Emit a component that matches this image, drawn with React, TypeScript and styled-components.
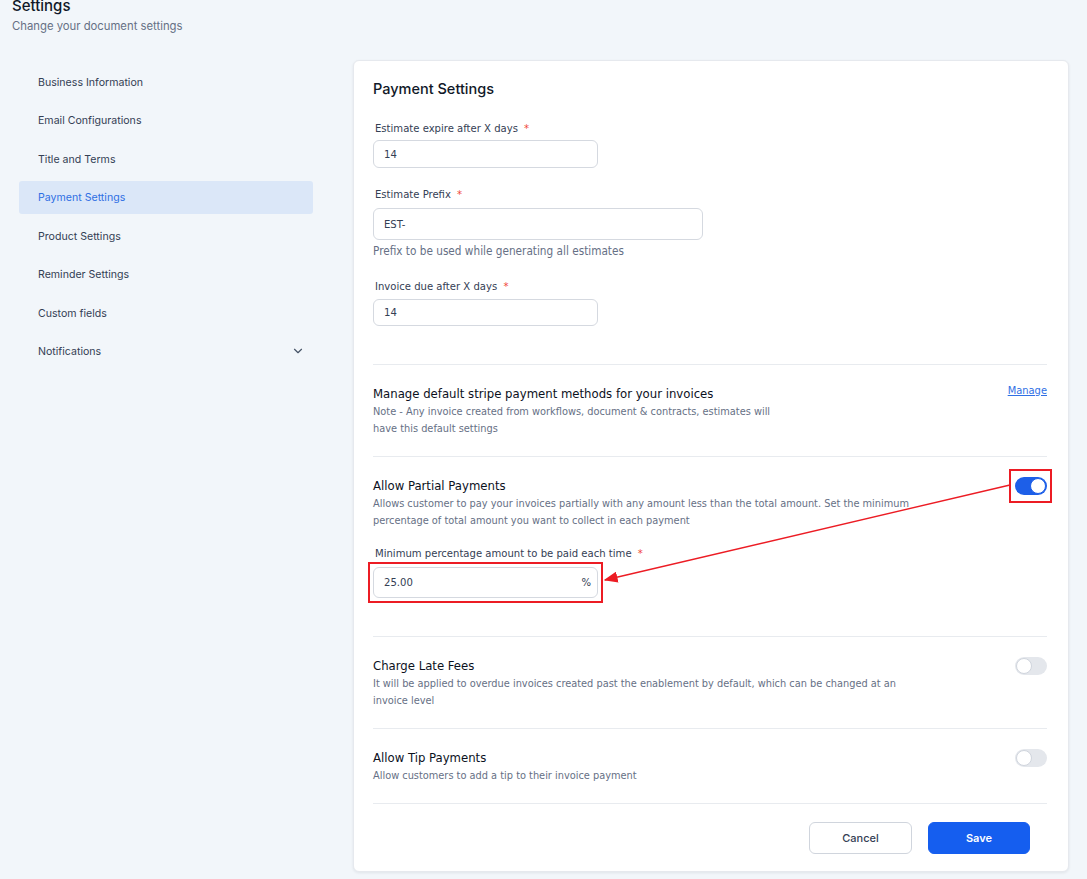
import styled, { createGlobalStyle } from "styled-components";
import { ChevronDown } from "lucide-react";

const GlobalStyle = createGlobalStyle`
  body {
    margin: 0;
    background: #f2f6fa;
    font-family: Inter, "Noto Sans", sans-serif;
    color: #101828;
  }
`;

const NAV_ITEMS = [
  "Business Information",
  "Email Configurations",
  "Title and Terms",
  "Payment Settings",
  "Product Settings",
  "Reminder Settings",
  "Custom fields",
  "Notifications",
];

export default function App() {
  return (
    <>
      <GlobalStyle />
      <Page>
        <Header>
          <h1>Settings</h1>
          <p>Change your document settings</p>
        </Header>

        <Main>
          <Sidebar>
            {NAV_ITEMS.map((item) => (
              <NavItem key={item} $active={item === "Payment Settings"}>
                {item}
                {item === "Notifications" && <ChevronDown size={14} strokeWidth={2} />}
              </NavItem>
            ))}
          </Sidebar>

          <Card>
            <CardTitle>Payment Settings</CardTitle>

            <Field $top={19}>
              <Label>
                Estimate expire after X days <Req>*</Req>
              </Label>
              <Input $width={225} $height={28} $gap={3}>
                14
              </Input>
            </Field>

            <Field $top={16}>
              <Label>
                Estimate Prefix <Req>*</Req>
              </Label>
              <Input $width={330} $height={32} $gap={5}>
                EST-
              </Input>
              <Helper>Prefix to be used while generating all estimates</Helper>
            </Field>

            <Field $top={17}>
              <Label>
                Invoice due after X days <Req>*</Req>
              </Label>
              <Input $width={225} $height={27} $gap={4}>
                14
              </Input>
            </Field>

            <Divider $top={38} />

            <Section>
              <SectionHead>
                <div>
                  <SectionTitle>Manage default stripe payment methods for your invoices</SectionTitle>
                  <Desc $max={410}>
                    Note - Any invoice created from workflows, document &amp; contracts, estimates will
                    have this default settings
                  </Desc>
                </div>
                <ManageLink href="#">Manage</ManageLink>
              </SectionHead>
            </Section>
            <Divider />

            <Section $bottom={38}>
              <SectionHead>
                <div>
                  <SectionTitle>Allow Partial Payments</SectionTitle>
                  <Desc $max={545}>
                    Allows customer to pay your invoices partially with any amount less than the total
                    amount. Set the minimum percentage of total amount you want to collect in each
                    payment
                  </Desc>
                </div>
                <Marked $pad="6px 3px 6px 4px" $margin="-6px -3px -6px -4px">
                  <Toggle $on />
                </Marked>
              </SectionHead>

              <Field $top={14}>
                <Label>
                  Minimum percentage amount to be paid each time <Req>*</Req>
                </Label>
                <Marked $pad="3px" $margin="2px -3px -3px -3px">
                  <Input $width={225} $height={31}>
                    25.00
                    <Suffix>%</Suffix>
                  </Input>
                </Marked>
              </Field>
            </Section>
            <Divider />

            <Section>
              <SectionHead>
                <div>
                  <SectionTitle>Charge Late Fees</SectionTitle>
                  <Desc $max={545}>
                    It will be applied to overdue invoices created past the enablement by default,
                    which can be changed at an invoice level
                  </Desc>
                </div>
                <Toggle />
              </SectionHead>
            </Section>
            <Divider />

            <Section>
              <SectionHead>
                <div>
                  <SectionTitle>Allow Tip Payments</SectionTitle>
                  <Desc $max={545}>Allow customers to add a tip to their invoice payment</Desc>
                </div>
                <Toggle />
              </SectionHead>
            </Section>
            <Divider />

            <Footer>
              <Button>Cancel</Button>
              <Button $primary>Save</Button>
            </Footer>

            <Arrow width="716" height="810" viewBox="0 0 716 810">
              <defs>
                <marker id="head" markerWidth="10" markerHeight="8" refX="9" refY="4" orient="auto">
                  <path d="M0 0 L10 4 L0 8 Z" fill="#ec1c24" />
                </marker>
              </defs>
              <line x1="656" y1="424" x2="251" y2="519" stroke="#ec1c24" strokeWidth="1.4" markerEnd="url(#head)" />
            </Arrow>
          </Card>
        </Main>
      </Page>
    </>
  );
}

// STYLED COMPONENTS

const NARROW = `"Liberation Sans Narrow", "DejaVu Sans Condensed", sans-serif`;

const Page = styled.div`
  display: flex;
  flex-direction: column;
  width: 1087px;
  min-height: 879px;
`;

const Header = styled.header`
  padding-left: 12px;
  margin-top: -2px;

  & h1 {
    margin: 0;
    font-size: 15px;
    line-height: 16px;
    font-weight: 500;
    color: #101828;
  }

  & p {
    margin: 5px 0 0;
    font-size: 11.3px;
    line-height: 14px;
    color: #667085;
  }
`;

const Main = styled.div`
  display: grid;
  grid-template-columns: 294px 716px;
  column-gap: 40px;
  align-items: start;
  padding-left: 19px;
  margin-top: 27px;
`;

const Sidebar = styled.nav`
  display: flex;
  flex-direction: column;
  gap: 5.43px;
  padding-top: 6px;
`;

const NavItem = styled.div<{ $active?: boolean }>`
  display: flex;
  align-items: center;
  justify-content: space-between;
  height: 33px;
  padding: 0 8px 0 19px;
  border-radius: 3px;
  font-size: 10.6px;
  color: ${(p) => (p.$active ? "#2f6fe4" : "#344054")};
  background: ${(p) => (p.$active ? "#dbe7f8" : "transparent")};

  & svg {
    color: #475467;
  }
`;

const Card = styled.section`
  position: relative;
  display: flex;
  flex-direction: column;
  padding: 18px 21px 17px 19px;
  background: #fff;
  border: 1px solid #e6e9ee;
  border-radius: 6px;
  box-shadow: 0 1px 3px rgba(16, 24, 40, 0.08);
`;

const CardTitle = styled.h2`
  margin: 0;
  font-size: 14.5px;
  line-height: 20px;
  font-weight: 500;
  color: #101828;
`;

const Field = styled.div<{ $top?: number }>`
  display: flex;
  flex-direction: column;
  align-items: flex-start;
  margin-top: ${(p) => p.$top ?? 0}px;
`;

const Label = styled.label`
  padding: 3px 0 0 2px;
  font-family: ${NARROW};
  font-size: 11.2px;
  line-height: 16px;
  color: #344054;
`;

const Req = styled.span`
  margin-left: 3px;
  color: #f04438;
`;

const Input = styled.div<{ $width: number; $height: number; $gap?: number }>`
  box-sizing: border-box;
  display: flex;
  align-items: center;
  justify-content: space-between;
  width: ${(p) => p.$width}px;
  height: ${(p) => p.$height}px;
  margin-top: ${(p) => p.$gap ?? 0}px;
  padding: 0 6px 0 10px;
  border: 1px solid #d5d9e0;
  border-radius: 6px;
  font-family: ${NARROW};
  font-size: 11.2px;
  color: #344054;
`;

const Marked = styled.span<{ $pad: string; $margin: string }>`
  display: inline-flex;
  padding: ${(p) => p.$pad};
  margin: ${(p) => p.$margin};
  outline: 2px solid #ec1c24;
`;

const Suffix = styled.span`
  color: #344054;
`;

const Helper = styled.p`
  margin: 3px 0 0;
  font-family: ${NARROW};
  font-size: 11.7px;
  line-height: 16px;
  color: #667085;
`;

const Divider = styled.hr<{ $top?: number }>`
  width: 100%;
  margin: ${(p) => p.$top ?? 0}px 0 0;
  border: 0;
  border-top: 1px solid #e8ebef;
`;

const Section = styled.div<{ $bottom?: number }>`
  padding: 20px 0 ${(p) => p.$bottom ?? 19}px;
`;

const SectionHead = styled.div`
  display: flex;
  align-items: flex-start;
  justify-content: space-between;
`;

const SectionTitle = styled.h3`
  margin: 0;
  font-family: ${NARROW};
  font-size: 13px;
  line-height: 18px;
  font-weight: 400;
  color: #0c111d;
`;

const Desc = styled.p<{ $max: number }>`
  max-width: ${(p) => p.$max}px;
  margin: 0;
  font-family: ${NARROW};
  font-size: 10.9px;
  line-height: 17px;
  color: #667085;
`;

const ManageLink = styled.a`
  margin-top: -1px;
  font-family: ${NARROW};
  font-size: 11px;
  color: #2f6fe4;
  text-decoration: underline;
`;

const Toggle = styled.span<{ $on?: boolean }>`
  position: relative;
  flex-shrink: 0;
  width: 32px;
  height: 18px;
  border-radius: 9px;
  background: ${(p) => (p.$on ? "#1d5fe8" : "#e4e7ec")};

  &::after {
    content: "";
    position: absolute;
    top: 1px;
    left: ${(p) => (p.$on ? "15px" : "1px")};
    width: 16px;
    height: 16px;
    box-sizing: border-box;
    border-radius: 50%;
    background: #fff;
    border: 1px solid ${(p) => (p.$on ? "#1d5fe8" : "#d0d5dd")};
  }
`;

const Footer = styled.div`
  display: flex;
  justify-content: flex-end;
  gap: 16px;
  padding: 18px 17px 0 0;
`;

const Button = styled.button<{ $primary?: boolean }>`
  width: ${(p) => (p.$primary ? 102 : 103)}px;
  height: 32px;
  border-radius: 6px;
  border: 1px solid ${(p) => (p.$primary ? "#155eef" : "#d0d5dd")};
  background: ${(p) => (p.$primary ? "#155eef" : "#fff")};
  color: ${(p) => (p.$primary ? "#fff" : "#344054")};
  font-family: Inter, sans-serif;
  font-size: 11px;
  font-weight: ${(p) => (p.$primary ? 600 : 500)};
`;

const Arrow = styled.svg`
  position: absolute;
  left: 0;
  top: 0;
  pointer-events: none;
`;
